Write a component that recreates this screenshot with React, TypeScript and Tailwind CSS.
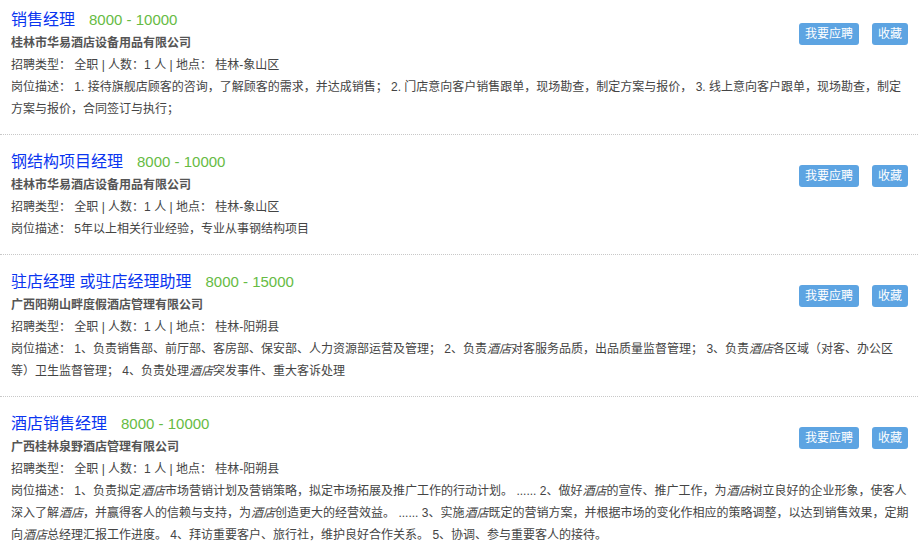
import React from "react";

type Part = string | { em: string };

interface Job {
  title: string;
  salary: string;
  company: string;
  location: string;
  desc: Part[];
}

const jobs: Job[] = [
  {
    title: "销售经理",
    salary: "8000 - 10000",
    company: "桂林市华易酒店设备用品有限公司",
    location: "桂林-象山区",
    desc: [
      "1. 接待旗舰店顾客的咨询，了解顾客的需求，并达成销售； 2. 门店意向客户销售跟单，现场勘查，制定方案与报价， 3. 线上意向客户跟单，现场勘查，制定方案与报价，合同签订与执行；",
    ],
  },
  {
    title: "钢结构项目经理",
    salary: "8000 - 10000",
    company: "桂林市华易酒店设备用品有限公司",
    location: "桂林-象山区",
    desc: ["5年以上相关行业经验，专业从事钢结构项目"],
  },
  {
    title: "驻店经理 或驻店经理助理",
    salary: "8000 - 15000",
    company: "广西阳朔山畔度假酒店管理有限公司",
    location: "桂林-阳朔县",
    desc: [
      "1、负责销售部、前厅部、客房部、保安部、人力资源部运营及管理； 2、负责",
      { em: "酒店" },
      "对客服务品质，出品质量监督管理； 3、负责",
      { em: "酒店" },
      "各区域（对客、办公区等）卫生监督管理； 4、负责处理",
      { em: "酒店" },
      "突发事件、重大客诉处理",
    ],
  },
  {
    title: "酒店销售经理",
    salary: "8000 - 10000",
    company: "广西桂林泉野酒店管理有限公司",
    location: "桂林-阳朔县",
    desc: [
      "1、负责拟定",
      { em: "酒店" },
      "市场营销计划及营销策略，拟定市场拓展及推广工作的行动计划。 ...... 2、做好",
      { em: "酒店" },
      "的宣传、推广工作，为",
      { em: "酒店" },
      "树立良好的企业形象，使客人深入了解",
      { em: "酒店" },
      "，并赢得客人的信赖与支持，为",
      { em: "酒店" },
      "创造更大的经营效益。 ...... 3、实施",
      { em: "酒店" },
      "既定的营销方案，并根据市场的变化作相应的策略调整，以达到销售效果，定期向",
      { em: "酒店" },
      "总经理汇报工作进度。 4、拜访重要客户、旅行社，维护良好合作关系。 5、协调、参与重要客人的接待。",
    ],
  },
];

const JobItem = ({ job }: { job: Job }) => {
  return (
    <div className="pl-[11px] pr-[8px] pt-[15px] pb-[14px] border-b border-dotted border-[#c8c8c8]">
      <div className="flex justify-between">
        <div>
          <div className="flex items-baseline h-[24px] leading-[24px]">
            <span className="text-[16px] text-[#0a35f0]">{job.title}</span>
            <span className="ml-[14px] text-[15px] text-[#66bb44]">{job.salary}</span>
          </div>
          <p className="text-[12px] leading-[22px] font-bold text-[#555]">{job.company}</p>
          <p className="text-[12px] leading-[22px] text-[#444]">
            招聘类型： 全职 | 人数：1 人 | 地点： {job.location}
          </p>
        </div>
        <div className="flex gap-[13px] mt-[15px] mr-[2px]">
          <button className="h-[22px] px-[6px] rounded-[3px] bg-[#5da4e2] text-white text-[12px] leading-[22px]">
            我要应聘
          </button>
          <button className="h-[22px] px-[6px] rounded-[3px] bg-[#5da4e2] text-white text-[12px] leading-[22px]">
            收藏
          </button>
        </div>
      </div>
      <p className="text-[12px] leading-[22px] text-[#444]">
        岗位描述： {job.desc.map((p, i) =>
          typeof p === "string" ? <span key={i}>{p}</span> : <em key={i} className="italic">{p.em}</em>
        )}
      </p>
    </div>
  );
};

export default function App() {
  return (
    <div
      className="w-[918px] h-[555px] overflow-hidden bg-white"
      style={{ fontFamily: '"Liberation Sans", "Noto Sans CJK SC", sans-serif' }}
    >
      <div className="-mt-[7px]">
        {jobs.map((job) => (
          <JobItem key={job.title} job={job} />
        ))}
      </div>
    </div>
  );
}
